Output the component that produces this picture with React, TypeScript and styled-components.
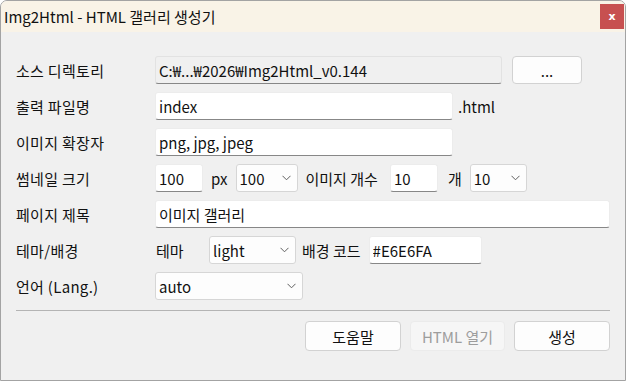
import styled, { createGlobalStyle } from "styled-components";

const GlobalStyle = createGlobalStyle`
  html, body {
    margin: 0;
    padding: 0;
    background: #ffffff;
  }
  body {
    font-family: "Noto Sans CJK KR", "Noto Sans", sans-serif;
    font-size: 15px;
    color: #111;
  }
`;

const Window = styled.div`
  box-sizing: border-box;
  width: 626px;
  height: 381px;
  border: 1px solid #a3a3a3;
  border-radius: 7px 7px 0 0;
  overflow: hidden;
  background: #f0f0f0;
  display: flex;
  flex-direction: column;
`;

const TitleBar = styled.div`
  height: 31px;
  flex: none;
  background: #f9f3e7;
  display: flex;
  align-items: center;
  justify-content: space-between;
  padding: 0 1px 0 3px;
`;

const Title = styled.span`
  font-size: 15px;
  color: #111;
`;

const CloseButton = styled.div`
  width: 24px;
  height: 25px;
  margin-top: 3px;
  align-self: flex-start;
  background: #c75050;
  color: #fff;
  font-family: "DejaVu Sans", sans-serif;
  font-size: 11px;
  font-weight: 700;
  display: flex;
  align-items: center;
  justify-content: center;
`;

const Body = styled.div`
  flex: 1;
  padding: 24px 15px 0 15px;
  display: flex;
  flex-direction: column;
`;

const Form = styled.div`
  display: grid;
  grid-template-columns: 139px 1fr;
  grid-auto-rows: 28px;
  row-gap: 8px;
  align-items: center;
`;

const Label = styled.div`
  white-space: nowrap;
  letter-spacing: 0.3px;
`;

const Field = styled.div<{ $gap?: number }>`
  display: flex;
  align-items: center;
  gap: ${(p) => p.$gap ?? 8}px;
  height: 28px;
`;

const TextInput = styled.input<{ $w?: number; $ml?: number; $readonly?: boolean }>`
  box-sizing: border-box;
  height: 28px;
  width: ${(p) => (p.$w ? `${p.$w}px` : "auto")};
  flex: ${(p) => (p.$w ? "none" : "1")};
  min-width: 0;
  margin: 0 0 0 ${(p) => p.$ml ?? 0}px;
  padding: 0 3px;
  font: inherit;
  font-size: 15px;
  color: #111;
  background: ${(p) => (p.$readonly ? "#f0f0f0" : "#ffffff")};
  border: 1px solid ${(p) => (p.$readonly ? "#e2e2e2" : "#ececec")};
  border-bottom: 1px solid #878787;
  border-radius: 3px;
  outline: none;
`;

const Unit = styled.span<{ $w?: number; $pad?: number; $ml?: number }>`
  white-space: nowrap;
  padding-left: ${(p) => p.$pad ?? 0}px;
  margin-left: ${(p) => p.$ml ?? 0}px;
  ${(p) => (p.$w ? `box-sizing: border-box; width: ${p.$w}px; flex: none;` : "")}
`;

const Combo = styled.div<{ $w: number }>`
  box-sizing: border-box;
  width: ${(p) => p.$w}px;
  flex: none;
  height: 28px;
  background: #fdfdfd;
  border: 1px solid #d6d6d6;
  border-radius: 3px;
  display: flex;
  align-items: center;
  justify-content: space-between;
  padding: 0 6px 0 3px;
`;

const Chevron = () => (
  <svg width="9" height="6" viewBox="0 0 9 6">
    <path d="M0.5 0.8 L4.5 4.8 L8.5 0.8" fill="none" stroke="#606060" strokeWidth="1" />
  </svg>
);

const ComboBox = ({ w, value }: { w: number; value: string }) => (
  <Combo $w={w}>
    <span>{value}</span>
    <Chevron />
  </Combo>
);

const Button = styled.div<{ $w: number; $h?: number; $disabled?: boolean }>`
  box-sizing: border-box;
  width: ${(p) => p.$w}px;
  height: ${(p) => p.$h ?? 28}px;
  flex: none;
  display: flex;
  align-items: center;
  justify-content: center;
  background: ${(p) => (p.$disabled ? "#f6f6f6" : "#fdfdfd")};
  color: ${(p) => (p.$disabled ? "#9d9d9d" : "#111")};
  border: 1px solid ${(p) => (p.$disabled ? "#ebebeb" : "#d2d2d2")};
  border-radius: 4px;
`;

const Divider = styled.div`
  height: 1px;
  background: #b4b4b4;
  margin: 10px 0 10px 0;
`;

const ButtonRow = styled.div`
  display: flex;
  justify-content: flex-end;
  gap: 9px;
`;

export default function App() {
  return (
    <>
      <GlobalStyle />
      <Window>
        <TitleBar>
          <Title>Img2Html - HTML 갤러리 생성기</Title>
          <CloseButton>x</CloseButton>
        </TitleBar>
        <Body>
          <Form>
            <Label>소스 디렉토리</Label>
            <Field $gap={10}>
              <TextInput $w={347} $readonly readOnly defaultValue="C:₩...₩2026₩Img2Html_v0.144" />
              <Button $w={70}>...</Button>
            </Field>

            <Label>출력 파일명</Label>
            <Field $gap={5}>
              <TextInput $w={298} defaultValue="index" />
              <Unit>.html</Unit>
            </Field>

            <Label>이미지 확장자</Label>
            <Field>
              <TextInput $w={298} defaultValue="png, jpg, jpeg" />
            </Field>

            <Label>썸네일 크기</Label>
            <Field>
              <TextInput $w={48} defaultValue="100" />
              <Unit>px</Unit>
              <ComboBox w={62} value="100" />
              <Unit>이미지 개수</Unit>
              <TextInput $w={48} $ml={4} defaultValue="10" />
              <Unit $ml={2}>개</Unit>
              <ComboBox w={57} value="10" />
            </Field>

            <Label>페이지 제목</Label>
            <Field>
              <TextInput defaultValue="이미지 갤러리" />
            </Field>

            <Label>테마/배경</Label>
            <Field $gap={6}>
              <Unit $w={48} $pad={1}>
                테마
              </Unit>
              <ComboBox w={87} value="light" />
              <Unit>배경 코드</Unit>
              <TextInput $w={113} $ml={2} defaultValue="#E6E6FA" />
            </Field>

            <Label>언어 (Lang.)</Label>
            <Field>
              <ComboBox w={148} value="auto" />
            </Field>
          </Form>
          <Divider />
          <ButtonRow>
            <Button $w={96} $h={30}>
              도움말
            </Button>
            <Button $w={95} $h={30} $disabled>
              HTML 열기
            </Button>
            <Button $w={96} $h={30}>
              생성
            </Button>
          </ButtonRow>
        </Body>
      </Window>
    </>
  );
}
